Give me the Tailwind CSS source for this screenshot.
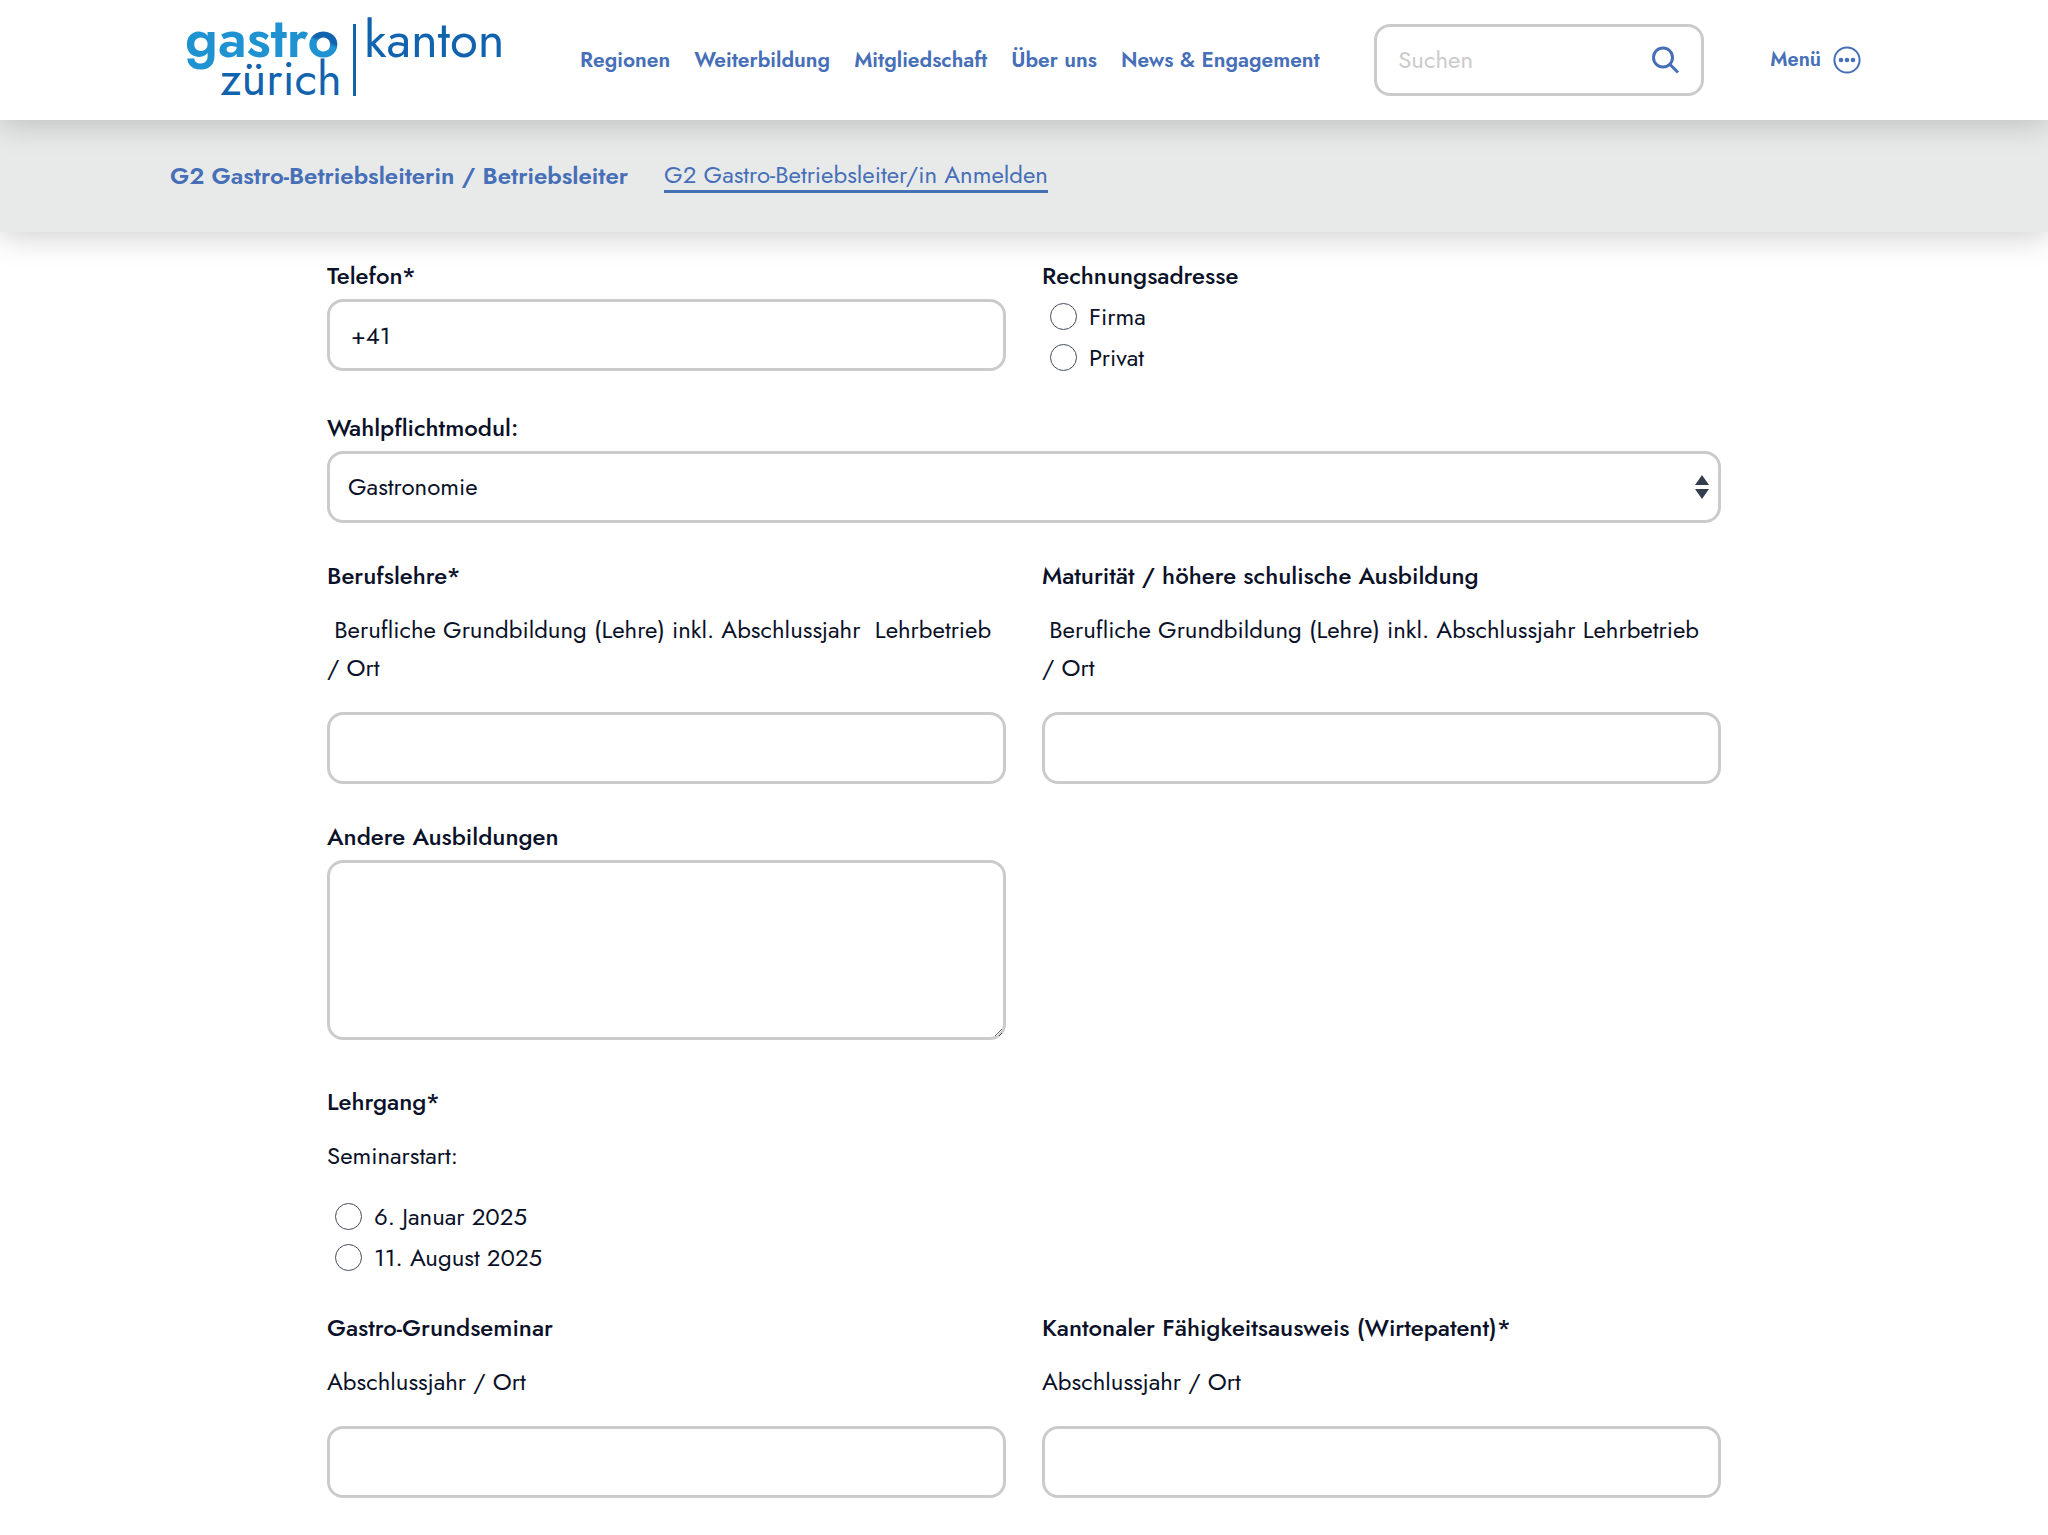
<!DOCTYPE html>
<html lang="de">
<head>
<meta charset="utf-8">
<meta name="viewport" content="width=device-width, initial-scale=1">
<title>G2 Gastro-Betriebsleiter/in Anmelden</title>
<script src="https://cdn.jsdelivr.net/npm/@tailwindcss/browser@4"></script>
</head>
<body class="bg-white font-[Jost,Lato,sans-serif] text-2xl/[38px] text-[#0a1128]">

<header class="relative z-20 bg-white shadow-[0_4px_30px_rgba(0,0,0,0.2)]">
  <div class="mx-auto flex h-[120px] max-w-[1708px] items-center px-[17px]">
    <a href="#" aria-label="Gastro Kanton Zürich" class="mr-[75px] shrink-0">
      <svg class="h-[80px] w-[318px] overflow-visible" viewBox="0 0 318 80" font-family="Jost, Lato, sans-serif">
        <defs>
          <linearGradient id="ring" gradientUnits="userSpaceOnUse" x1="146" y1="12" x2="138" y2="34">
            <stop offset="0.450" stop-color="#1263ae"/><stop offset="0.600" stop-color="#1f93d1"/>
          </linearGradient>
        </defs>
        <text x="-2" y="37" font-size="55" font-weight="600" fill="#1f93d1">gastr<tspan fill="url(#ring)">o</tspan></text>
        <text x="33" y="75" font-size="47" fill="#1263ae">zürich</text>
        <rect x="166" y="4" width="3" height="72" fill="#1263ae"/>
        <text x="177" y="37" font-size="51" fill="#1263ae">kanton</text>
      </svg>
    </a>
    <nav aria-label="Hauptnavigation" class="flex flex-1 gap-6 text-[21px]/[28px] font-semibold whitespace-nowrap text-[#466fb8]">
      <a href="#">Regionen</a>
      <a href="#">Weiterbildung</a>
      <a href="#">Mitgliedschaft</a>
      <a href="#">Über uns</a>
      <a href="#">News &amp; Engagement</a>
    </nav>
    <form role="search" class="mr-[66px] flex h-18 w-[330px] shrink-0 items-center rounded-2xl border-3 border-[#cbcbcb] pr-5 pl-[21px]">
      <input type="search" aria-label="Suchen" placeholder="Suchen" class="min-w-0 flex-1 outline-none placeholder:text-[#cbcbcb]">
      <button type="button" aria-label="Suche starten" class="text-[#466fb8]">
        <svg class="size-8" viewBox="0 0 32 32" fill="none" stroke="currentColor" stroke-width="3"><circle cx="14" cy="13.500" r="9.500"/><path d="M21 20.500l8 8"/></svg>
      </button>
    </form>
    <button type="button" class="flex shrink-0 items-center gap-3 text-[20px]/[28px] font-semibold text-[#466fb8]">Menü
      <svg class="size-7" viewBox="0 0 28 28" fill="currentColor"><circle cx="14" cy="14" r="12.600" fill="none" stroke="currentColor" stroke-width="2"/><circle cx="8" cy="14" r="2.300"/><circle cx="14" cy="14" r="2.300"/><circle cx="20" cy="14" r="2.300"/></svg>
    </button>
  </div>
</header>

<nav aria-label="Seitennavigation" class="relative z-10 bg-[#e8eae9] shadow-[0_4px_30px_rgba(0,0,0,0.2)]">
  <div class="mx-auto flex h-28 max-w-[1708px] items-center gap-9 text-[#466fb8]">
    <a href="#" class="font-semibold">G2 Gastro-Betriebsleiterin / Betriebsleiter</a>
    <a href="#" class="border-b-3 border-[#466fb8] text-2xl/[30px]">G2 Gastro-Betriebsleiter/in Anmelden</a>
  </div>
</nav>

<main class="mx-auto max-w-[1394px] pt-[26px]">
  <form>
    <div class="grid grid-cols-2 gap-x-9">
      <div class="pb-[35px]">
        <label for="tel" class="mb-[5px] block leading-9 font-medium">Telefon*</label>
        <input id="tel" type="tel" value="+41" class="block h-18 w-full rounded-2xl border-3 border-[#cbcbcb] px-[21px]">
      </div>
      <fieldset class="pb-8">
        <legend class="mb-[2px] leading-9 font-medium">Rechnungsadresse</legend>
        <label class="flex h-[41px] items-center gap-3 pl-2"><input type="radio" name="adresse" class="size-[27px] appearance-none rounded-full border border-[#454a5c] bg-white">Firma</label>
        <label class="flex h-[41px] items-center gap-3 pl-2"><input type="radio" name="adresse" class="size-[27px] appearance-none rounded-full border border-[#454a5c] bg-white">Privat</label>
      </fieldset>
    </div>

    <div class="pb-[35px]">
      <label for="modul" class="mb-[5px] block leading-9 font-medium">Wahlpflichtmodul:</label>
      <div class="relative">
        <select id="modul" class="block h-18 w-full appearance-none rounded-2xl border-3 border-[#cbcbcb] bg-white px-[18px]"><option>Gastronomie</option></select>
        <svg class="pointer-events-none absolute top-6 right-3 h-6 w-3.5 text-[#343d4e]" viewBox="0 0 14 24" fill="currentColor"><path d="M7 0l7 10H0zM7 24L0 14h14z"/></svg>
      </div>
    </div>

    <div class="grid grid-cols-2 gap-x-9">
      <div class="pb-[35px]">
        <label for="lehre" class="mb-[17px] block leading-9 font-medium">Berufslehre*</label>
        <p class="mb-[25px]">&nbsp;Berufliche Grundbildung (Lehre) inkl. Abschlussjahr&nbsp; Lehrbetrieb / Ort</p>
        <input id="lehre" type="text" class="block h-18 w-full rounded-2xl border-3 border-[#cbcbcb] px-[21px]">
      </div>
      <div class="pb-[35px]">
        <label for="matura" class="mb-[17px] block leading-9 font-medium">Maturität / höhere schulische Ausbildung</label>
        <p class="mb-[25px]">&nbsp;Berufliche Grundbildung (Lehre) inkl. Abschlussjahr Lehrbetrieb<br>/ Ort</p>
        <input id="matura" type="text" class="block h-18 w-full rounded-2xl border-3 border-[#cbcbcb] px-[21px]">
      </div>
    </div>

    <div class="grid grid-cols-2 gap-x-9">
      <div class="pb-11">
        <label for="andere" class="mb-[5px] block leading-9 font-medium">Andere Ausbildungen</label>
        <textarea id="andere" class="block h-[180px] w-full rounded-2xl border-3 border-[#cbcbcb] px-[21px] py-3"></textarea>
      </div>
    </div>

    <fieldset class="pb-8">
      <legend class="mb-[17px] leading-9 font-medium">Lehrgang*</legend>
      <p class="mb-[21px]">Seminarstart:</p>
      <label class="flex h-[41px] items-center gap-3 pl-2"><input type="radio" name="start" class="size-[27px] appearance-none rounded-full border border-[#454a5c] bg-white">6. Januar 2025</label>
      <label class="flex h-[41px] items-center gap-3 pl-2"><input type="radio" name="start" class="size-[27px] appearance-none rounded-full border border-[#454a5c] bg-white">11. August 2025</label>
    </fieldset>

    <div class="grid grid-cols-2 gap-x-9">
      <div class="pb-[35px]">
        <label for="grund" class="mb-[17px] block leading-9 font-medium">Gastro-Grundseminar</label>
        <p class="mb-[25px]">Abschlussjahr / Ort</p>
        <input id="grund" type="text" class="block h-18 w-full rounded-2xl border-3 border-[#cbcbcb] px-[21px]">
      </div>
      <div class="pb-[35px]">
        <label for="patent" class="mb-[17px] block leading-9 font-medium">Kantonaler Fähigkeitsausweis (Wirtepatent)*</label>
        <p class="mb-[25px]">Abschlussjahr / Ort</p>
        <input id="patent" type="text" class="block h-18 w-full rounded-2xl border-3 border-[#cbcbcb] px-[21px]">
      </div>
    </div>
  </form>
</main>
</body>
</html>
